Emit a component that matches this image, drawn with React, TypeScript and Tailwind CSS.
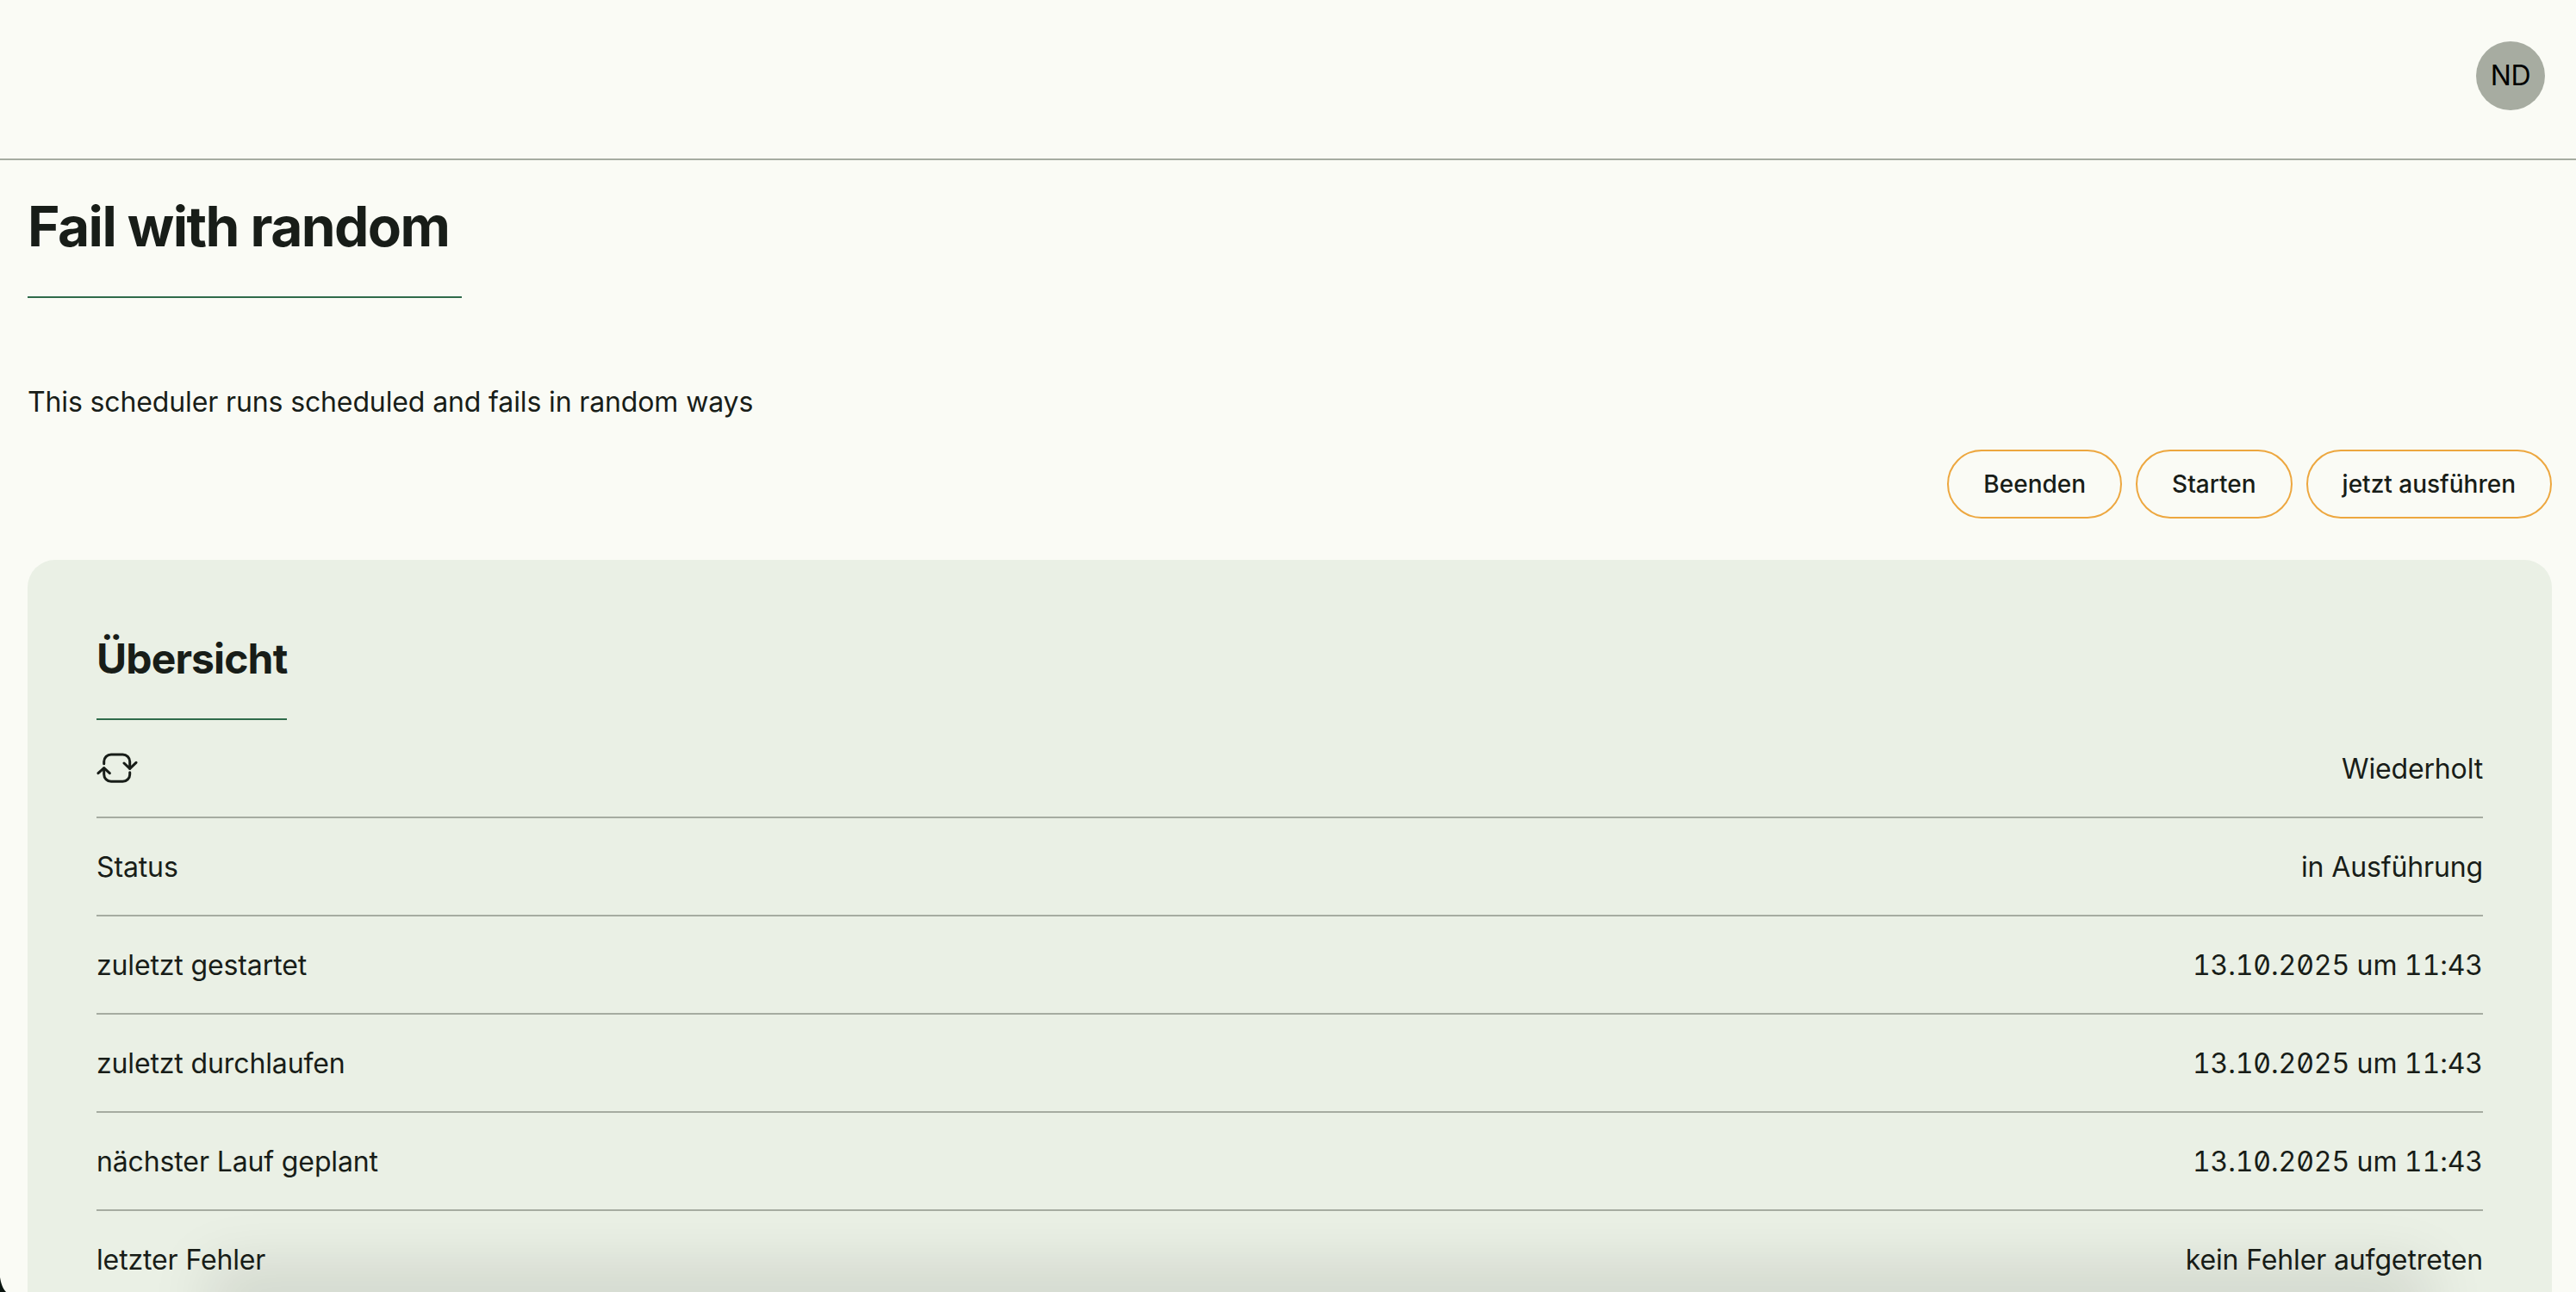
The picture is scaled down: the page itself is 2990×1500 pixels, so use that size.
const INK = 'text-[#181d18]'

const rows = [
  { label: 'Status', value: 'in Ausführung' },
  { label: 'zuletzt gestartet', value: '13.10.2025 um 11:43', date: true },
  { label: 'zuletzt durchlaufen', value: '13.10.2025 um 11:43', date: true },
  { label: 'nächster Lauf geplant', value: '13.10.2025 um 11:43', date: true },
  { label: 'letzter Fehler', value: 'kein Fehler aufgetreten' },
]

function RepeatIcon() {
  return (
    <svg width="48" height="48" viewBox="0 0 48 48" fill="none" stroke="#181d18" strokeWidth="3" strokeLinecap="round" strokeLinejoin="round">
      <path d="M8.7 18.7v-2.4a8.3 8.3 0 0 1 8.3-8.3h13.4a8.3 8.3 0 0 1 8.3 8.3v8" />
      <path d="M32 18l6.7 6.3 7.3-7" />
      <path d="M8.7 23.7v7.3a8.3 8.3 0 0 0 8.3 8.3h13.4a8.3 8.3 0 0 0 8.3-8.3v-2.3" />
      <path d="M2 29.7l6.7-6 6.6 6" />
    </svg>
  )
}

function PillButton({ label }: { label: string }) {
  return (
    <button className={`h-[80px] px-[40px] rounded-[40px] border-2 border-[#eda73f] text-[28px] font-medium ${INK}`}>
      {label}
    </button>
  )
}

export default function App() {
  return (
    <div className={`relative h-[1500px] overflow-hidden bg-[#fafbf5] font-['Inter',sans-serif] ${INK}`}>
      <header className="flex h-[186px] items-start justify-end border-b-2 border-[#a6aca1] pt-[48px] pr-[36px]">
        <div className="flex h-[80px] w-[80px] items-center justify-center rounded-full bg-[#a7aca1] text-[32px] tracking-[-0.01em] text-black">ND</div>
      </header>

      <main className="pl-[32px] pr-[28px]">
        <div className="inline-block w-[504px] border-b-2 border-[#2f6b4a] pt-[37px] pb-[41px]">
          <h1 className="text-[64px] leading-[80px] font-bold tracking-[-0.024em] whitespace-nowrap">Fail with random</h1>
        </div>
        <p className="mt-[97px] text-[32px] leading-[48px] tracking-[-0.004em]">This scheduler runs scheduled and fails in random ways</p>

        <div className="mt-[31px] flex justify-end gap-[16px]">
          <PillButton label="Beenden" />
          <PillButton label="Starten" />
          <PillButton label="jetzt ausführen" />
        </div>

        <section className="mt-[48px] h-[900px] rounded-[32px] bg-[#eaf0e5] px-[80px] pt-[83px]">
          <div className="inline-block border-b-2 border-[#2f6b4a] pb-[37px]">
            <h2 className="text-[48px] leading-[64px] font-bold tracking-[-0.018em]">Übersicht</h2>
          </div>
          <div className="flex h-[114px] items-center justify-between border-b-2 border-[#a6aca1] pt-[2px] text-[32px] tracking-[-0.005em]">
            <span className="-mt-[2px]"><RepeatIcon /></span>
            <span>Wiederholt</span>
          </div>
          {rows.map((row) => (
            <div key={row.label} className="flex h-[114px] items-center justify-between border-b-2 border-[#a6aca1] pt-[2px] text-[32px] tracking-[-0.004em]">
              <span>{row.label}</span>
              <span className={row.date ? 'tabular-nums slashed-zero tracking-[-0.003em]' : ''}>{row.value}</span>
            </div>
          ))}
        </section>
      </main>

      {/* shadow of something just below the screenshot, and the window corner */}
      <div className="absolute bottom-[-12px] left-[270px] right-[200px] h-[12px] shadow-[0_0_70px_28px_rgba(0,0,0,0.12)]" />
      <svg className="absolute bottom-0 left-0" width="8" height="20" viewBox="0 0 8 20" fill="#0b1510">
        <path d="M0 3C1 9 3 16 7 20H0Z" />
      </svg>
    </div>
  )
}
